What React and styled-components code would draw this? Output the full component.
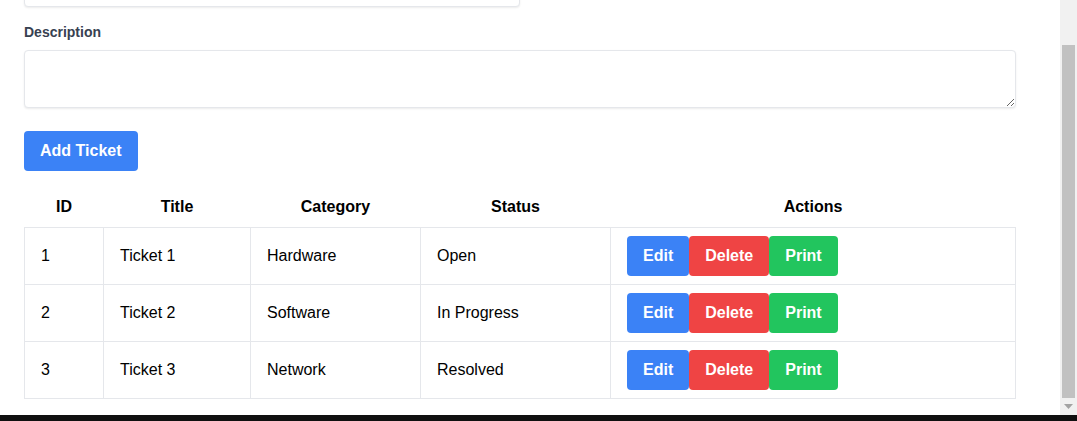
import React from "react";
import styled, { createGlobalStyle } from "styled-components";

const GlobalStyle = createGlobalStyle`
  html, body {
    margin: 0;
    padding: 0;
    background: #ffffff;
  }
  body {
    font-family: "Liberation Sans", Arial, sans-serif;
    color: #000000;
  }
  * {
    box-sizing: border-box;
  }
`;

const Screen = styled.div`
  width: 1077px;
  height: 421px;
  display: flex;
  flex-direction: column;
  overflow: hidden;
`;

const Window = styled.div`
  height: 415px;
  display: flex;
`;

const Page = styled.main`
  flex: 1;
  display: flex;
  flex-direction: column;
  justify-content: flex-end;
  overflow: hidden;
`;

const Container = styled.div`
  width: 992px;
  margin-left: 24px;
  padding-bottom: 16px;
`;

const FieldRow = styled.div`
  display: grid;
  grid-template-columns: 1fr 1fr;
  margin-bottom: 15px;
`;

const Field = styled.div`
  margin-bottom: ${(p) => (p.$last ? "23px" : "0")};
`;

const Label = styled.label`
  display: block;
  font-size: 14px;
  line-height: 20px;
  font-weight: 700;
  color: #374151;
  margin-bottom: 8px;
`;

const Input = styled.input`
  display: block;
  width: 100%;
  height: 38px;
  padding: 8px;
  font-family: inherit;
  font-size: 14px;
  border: 1px solid #e5e7eb;
  border-radius: 4px;
  box-shadow: 0 1px 2px rgba(0, 0, 0, 0.08);
  outline: none;
`;

const TextArea = styled.textarea`
  display: block;
  width: 100%;
  height: 58px;
  padding: 8px;
  font-family: inherit;
  font-size: 14px;
  line-height: 20px;
  border: 1px solid #e5e7eb;
  border-radius: 4px;
  box-shadow: 0 1px 2px rgba(0, 0, 0, 0.08);
  outline: none;
`;

const Button = styled.button`
  font-family: inherit;
  font-size: 16px;
  line-height: 24px;
  font-weight: 700;
  color: #ffffff;
  background: ${(p) => p.$color || "#3b82f6"};
  border: none;
  border-radius: 4px;
  padding: 8px 16px;
  cursor: pointer;
`;

const AddButton = styled(Button)`
  display: block;
  margin-bottom: 16px;
`;

const Table = styled.table`
  width: 100%;
  table-layout: fixed;
  border-collapse: collapse;
  font-size: 16px;
`;

const Th = styled.th`
  width: ${(p) => (p.$w ? `${p.$w}px` : "auto")};
  padding: 8px 16px;
  line-height: 24px;
  font-weight: 700;
  text-align: center;
`;

const Td = styled.td`
  border: 1px solid #e5e7eb;
  padding: 8px 16px;
  line-height: 24px;
  vertical-align: middle;
  text-align: left;
`;

const Actions = styled.div`
  display: flex;
`;

const ScrollTrack = styled.div`
  width: 17px;
  background: #f1f1f1;
  display: flex;
  flex-direction: column;
`;

const ScrollSpace = styled.div`
  height: 45px;
`;

const ScrollThumb = styled.div`
  flex: 1;
  margin: 0 2px;
  background: #c1c1c1;
`;

const ScrollArrow = styled.div`
  height: 17px;
  display: flex;
  align-items: center;
  justify-content: center;
`;

const Taskbar = styled.div`
  height: 6px;
  background: #101010;
`;

const tickets = [
  { id: 1, title: "Ticket 1", category: "Hardware", status: "Open" },
  { id: 2, title: "Ticket 2", category: "Software", status: "In Progress" },
  { id: 3, title: "Ticket 3", category: "Network", status: "Resolved" },
];

function App() {
  return (
    <Screen>
      <GlobalStyle />
      <Window>
        <Page>
          <Container>
            <FieldRow>
              <Input type="text" aria-label="Title" />
            </FieldRow>
            <Field $last>
              <Label>Description</Label>
              <TextArea rows={2} />
            </Field>
            <AddButton>Add Ticket</AddButton>
            <Table>
              <thead>
                <tr>
                  <Th $w={79}>ID</Th>
                  <Th $w={147}>Title</Th>
                  <Th $w={170}>Category</Th>
                  <Th $w={190}>Status</Th>
                  <Th>Actions</Th>
                </tr>
              </thead>
              <tbody>
                {tickets.map((ticket) => (
                  <tr key={ticket.id}>
                    <Td>{ticket.id}</Td>
                    <Td>{ticket.title}</Td>
                    <Td>{ticket.category}</Td>
                    <Td>{ticket.status}</Td>
                    <Td>
                      <Actions>
                        <Button $color="#3b82f6">Edit</Button>
                        <Button $color="#ef4444">Delete</Button>
                        <Button $color="#22c55e">Print</Button>
                      </Actions>
                    </Td>
                  </tr>
                ))}
              </tbody>
            </Table>
          </Container>
        </Page>
        <ScrollTrack>
          <ScrollSpace />
          <ScrollThumb />
          <ScrollArrow>
            <svg width="9" height="5" viewBox="0 0 9 5">
              <path d="M0 0 H9 L4.5 5 Z" fill="#a3a3a3" />
            </svg>
          </ScrollArrow>
        </ScrollTrack>
      </Window>
      <Taskbar />
    </Screen>
  );
}

export default App;
